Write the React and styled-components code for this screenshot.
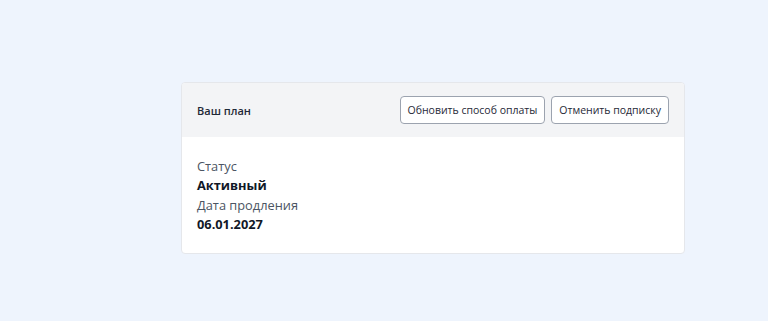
import React from "react";
import styled, { createGlobalStyle } from "styled-components";

const Global = createGlobalStyle`
  html, body { margin: 0; padding: 0; }
  body {
    background: #eef4fd;
    font-family: "Open Sans", "Noto Sans", sans-serif;
    color: #111827;
  }
`;

const Page = styled.div`
  min-height: 321px;
  box-sizing: border-box;
  padding: 82px 83px 0 181px;
`;

const Card = styled.section`
  width: 504px;
  background: #ffffff;
  border: 1px solid #e5e7eb;
  border-radius: 4px;
  overflow: hidden;
  box-sizing: border-box;
`;

const Header = styled.div`
  display: flex;
  align-items: center;
  justify-content: space-between;
  height: 54px;
  padding: 0 15px;
  background: #f3f4f6;
`;

const Title = styled.h2`
  margin: 0;
  font-size: 11px;
  font-weight: 600;
  color: #1f2937;
`;

const Actions = styled.div`
  display: flex;
  gap: 6px;
`;

const Button = styled.button`
  height: 28px;
  padding: 0 7px;
  background: #ffffff;
  border: 1px solid #9ca3af;
  border-radius: 4px;
  font-family: inherit;
  font-size: 10.5px;
  font-weight: 500;
  color: #1f2937;
  cursor: pointer;
`;

const Body = styled.div`
  padding: 19px 15px 19px;
  display: flex;
  flex-direction: column;
`;

const Label = styled.div`
  font-size: 12.8px;
  line-height: 20px;
  font-weight: 500;
  color: #4b5563;
`;

const Value = styled.div`
  font-size: 12.8px;
  line-height: 19px;
  font-weight: 700;
  color: #111827;
`;

export default function App() {
  return (
    <>
      <Global />
      <Page>
        <Card>
          <Header>
            <Title>Ваш план</Title>
            <Actions>
              <Button>Обновить способ оплаты</Button>
              <Button>Отменить подписку</Button>
            </Actions>
          </Header>
          <Body>
            <Label>Статус</Label>
            <Value>Активный</Value>
            <Label>Дата продления</Label>
            <Value>06.01.2027</Value>
          </Body>
        </Card>
      </Page>
    </>
  );
}
